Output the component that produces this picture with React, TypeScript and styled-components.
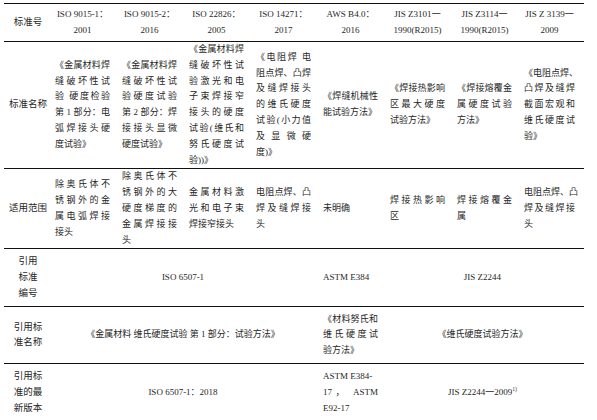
import React from "react";
import styled, { createGlobalStyle } from "styled-components";

const GlobalStyle = createGlobalStyle`
  html, body {
    margin: 0;
    padding: 0;
    background: #fff;
  }
  body {
    font-family: "Liberation Serif", "Noto Sans CJK SC", serif;
    color: #262626;
  }
`;

const Page = styled.div`
  padding: 3px 0 0 4px;
`;

const Table = styled.table`
  width: 580px;
  border-collapse: collapse;
  table-layout: fixed;
  font-size: 9px;
  line-height: 15.8px;
`;

const Row = styled.tr<{ $h: number; $top?: boolean }>`
  height: ${(p) => p.$h}px;
  border-bottom: 1.3px solid #111;
  border-top: ${(p) => (p.$top ? "1.3px solid #111" : "none")};
`;

const Cell = styled.td<{ $center?: boolean }>`
  padding: 0 9px 0 3px;
  vertical-align: middle;
  text-align: ${(p) => (p.$center ? "center" : "left")};
  white-space: nowrap;
`;

const Label = styled.td`
  padding: 0;
  vertical-align: middle;
  text-align: center;
  white-space: nowrap;
  font-size: 9.5px;
`;

const Line = styled.div<{ $spread?: boolean }>`
  text-align-last: ${(p) => (p.$spread ? "justify" : "auto")};
`;

const Dash = styled.span`
  font-family: "Noto Sans CJK SC", sans-serif;
`;

const Sup = styled.sup`
  font-size: 5.5px;
  line-height: 0;
  vertical-align: 4px;
`;

// every line but the last is spread to the cell width, unless `spread` says otherwise
const Lines = ({
  lines,
  center,
  spread,
}: {
  lines: React.ReactNode[];
  center?: boolean;
  spread?: boolean[];
}) => (
  <>
    {lines.map((l, i) => (
      <Line key={i} $spread={spread ? spread[i] : !center && i < lines.length - 1}>
        {l}
      </Line>
    ))}
  </>
);

const header: React.ReactNode[][] = [
  ["ISO 9015-1：", "2001"],
  ["ISO 9015-2：", "2016"],
  ["ISO 22826：", "2005"],
  ["ISO 14271：", "2017"],
  ["AWS B4.0：", "2016"],
  [<>JIS Z3101<Dash>一</Dash></>, "1990(R2015)"],
  [<>JIS Z3114<Dash>一</Dash></>, "1990(R2015)"],
  [<>JIS Z 3139<Dash>一</Dash></>, "2009"],
];

const names = [
  ["《金属材料焊", "缝破坏性试", "验 硬度检验", "第 1 部分：电", "弧焊接头硬", "度试验》"],
  ["《金属材料焊", "缝破坏性试", "验硬度试验", "第 2 部分：焊", "接接头显微", "硬度试验》"],
  ["《金属材料焊", "缝破坏性试", "验激光和电", "子束焊接窄", "接头的硬度", "试验(维氏和", "努氏硬度试", "验))》"],
  ["《电阻焊 电", "阻点焊、凸焊", "及缝焊接头", "的维氏硬度", "试验(小力值", "及 显 微 硬", "度)》"],
  ["《焊缝机械性", "能试验方法》"],
  ["《焊接热影响", "区最大硬度", "试验方法》"],
  ["《焊接熔覆金", "属硬度试验", "方法》"],
  ["《电阻点焊、", "凸焊及缝焊", "截面宏观和", "维氏硬度试", "验》"],
];

const scopes = [
  ["除奥氏体不", "锈钢外的金", "属电弧焊接", "接头"],
  ["除奥氏体不", "锈钢外的大", "硬度梯度的", "金属焊接接", "头"],
  ["金属材料激", "光和电子束", "焊接窄接头"],
  ["电阻点焊、凸", "焊及缝焊接", "头"],
  ["未明确"],
  ["焊接热影响", "区"],
  ["焊接熔覆金", "属"],
  ["电阻点焊、凸", "焊及缝焊接", "头"],
];

const widths = [48, 67, 67, 67, 67, 67, 67, 67, 63];

export default function App() {
  return (
    <Page>
      <GlobalStyle />
      <Table>
        <colgroup>
          {widths.map((w, i) => (
            <col key={i} style={{ width: w }} />
          ))}
        </colgroup>
        <tbody>
          <Row $h={38} $top>
            <Label>标准号</Label>
            {header.map((h, i) => (
              <Cell key={i} $center>
                <Lines lines={h} center />
              </Cell>
            ))}
          </Row>
          <Row $h={125}>
            <Label>标准名称</Label>
            {names.map((n, i) => (
              <Cell key={i}>
                <Lines lines={n} />
              </Cell>
            ))}
          </Row>
          <Row $h={76}>
            <Label>适用范围</Label>
            {scopes.map((s, i) => (
              <Cell key={i}>
                <Lines lines={s} />
              </Cell>
            ))}
          </Row>
          <Row $h={58}>
            <Label>
              <Lines lines={["引用", "标准", "编号"]} center />
            </Label>
            <Cell colSpan={4} $center>
              ISO 6507-1
            </Cell>
            <Cell>ASTM E384</Cell>
            <Cell colSpan={3} $center>
              JIS Z2244
            </Cell>
          </Row>
          <Row $h={57}>
            <Label>
              <Lines lines={["引用标", "准名称"]} center />
            </Label>
            <Cell colSpan={4} $center>
              《金属材料 维氏硬度试验 第 1 部分：试验方法》
            </Cell>
            <Cell>
              <Lines lines={["《材料努氏和", "维氏硬度试", "验方法》"]} />
            </Cell>
            <Cell colSpan={3} $center>
              《维氏硬度试验方法》
            </Cell>
          </Row>
          <Row $h={58}>
            <Label>
              <Lines lines={["引用标", "准的最", "新版本"]} center />
            </Label>
            <Cell colSpan={4} $center>
              ISO 6507-1：2018
            </Cell>
            <Cell>
              <Lines
                lines={["ASTM E384-", "17，  ASTM", "E92-17"]}
                spread={[false, true, false]}
              />
            </Cell>
            <Cell colSpan={3} $center>
              JIS Z2244<Dash>一</Dash>2009<Sup>1)</Sup>
            </Cell>
          </Row>
        </tbody>
      </Table>
    </Page>
  );
}
